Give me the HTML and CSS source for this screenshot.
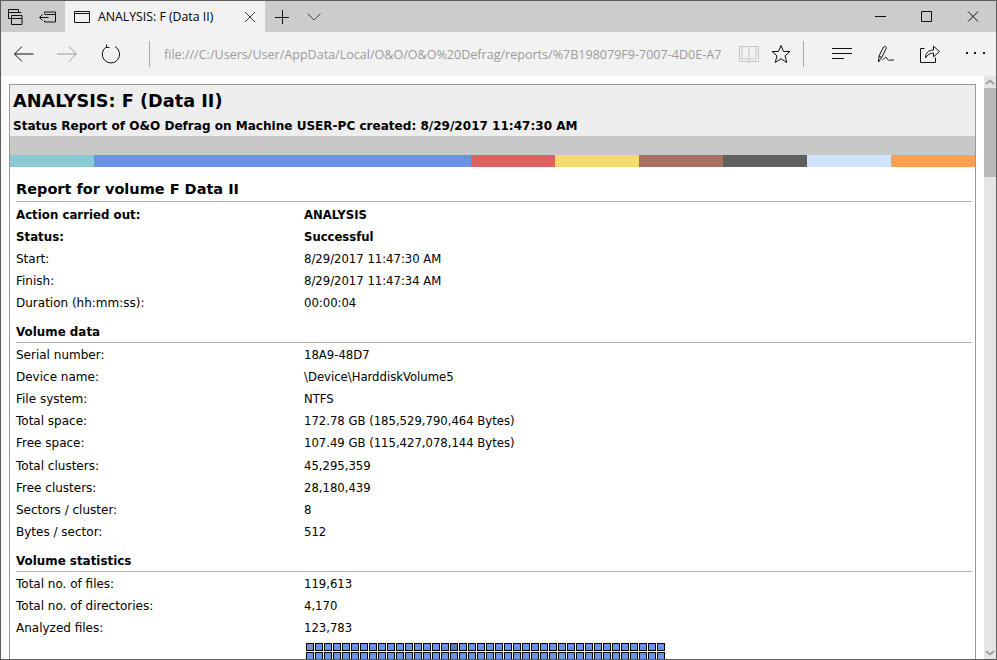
FILE: index.html
```html
<!DOCTYPE html>
<html lang="en">
<head>
<meta charset="utf-8">
<title>ANALYSIS: F (Data II)</title>
<link rel="stylesheet" href="styles.css">
</head>
<body>
<div class="window">
  <div class="tabstrip">
    <div class="strip-btn">
      <svg width="20" height="20" viewBox="0 0 20 20" class="ic"><path d="M1.500 2.500h10v3M1.500 2.500v9h3M1.500 5.500h13M4.500 8.500h10.500v9h-10.500zM4.500 11.500h10.500"/></svg>
    </div>
    <div class="strip-btn">
      <svg width="20" height="20" viewBox="0 0 20 20" class="ic"><path d="M5.500 6.500v-1.500h11v10h-11v-1.500M5.500 7.500h11M0.500 10.500h9M3.500 7.500l-3 3 3 3"/></svg>
    </div>
    <div class="tab">
      <svg width="18" height="14" viewBox="0 0 18 14" class="ic tab-ic"><path d="M1.500 1.500h15v11h-15zM1.500 3.500h15"/></svg>
      <span class="tab-title">ANALYSIS: F (Data II)</span>
      <svg width="12" height="12" viewBox="0 0 12 12" class="ic tab-x"><path d="M1 1l10 10M11 1l-10 10"/></svg>
    </div>
    <div class="strip-btn plus">
      <svg width="14" height="14" viewBox="0 0 14 14" class="ic"><path d="M7.500 0v14M0 7.500h14"/></svg>
    </div>
    <div class="strip-btn chev">
      <svg width="14" height="8" viewBox="0 0 14 8" class="ic"><path d="M0.500 0.500l6.500 6.500 6.500-6.500"/></svg>
    </div>
    <div class="spacer"></div>
    <div class="win-btn"><svg width="12" height="11" viewBox="0 0 12 11" class="ic"><path d="M0 5.500h11"/></svg></div>
    <div class="win-btn"><svg width="12" height="11" viewBox="0 0 12 11" class="ic"><path d="M0.500 0.500h10v10h-10z"/></svg></div>
    <div class="win-btn"><svg width="12" height="11" viewBox="0 0 12 11" class="ic"><path d="M1 0.500l10 10M11 0.500l-10 10"/></svg></div>
  </div>
  <div class="toolbar">
    <div class="nav-btn back"><svg width="20" height="16" viewBox="0 0 20 16" class="ic"><path d="M0.500 8h19M8 0.500l-7.500 7.500 7.500 7.500"/></svg></div>
    <div class="nav-btn fwd"><svg width="20" height="16" viewBox="0 0 20 16" class="ic dim"><path d="M0 8h19M12 0.500l7.500 7.500-7.500 7.500"/></svg></div>
    <div class="nav-btn reload"><svg width="20" height="20" viewBox="0 0 20 20" class="ic"><path d="M5.500 2.800a8.700 8.700 0 1 0 8.500 -0.200M5.500 0.500v3h3"/></svg></div>
    <div class="sep"></div>
    <div class="url">file:///C:/Users/User/AppData/Local/O&amp;O/O&amp;O%20Defrag/reports/%7B198079F9-7007-4D0E-A7</div>
    <svg width="20" height="18" viewBox="0 0 20 18" class="ic faint book"><path d="M0.500 1.500h8l1.500 1 1.500-1h8v15h-8l-1.500 1-1.500-1h-8zM3 1.500v12.500h6.500M17 1.500v12.500h-6.500M10 2.500v14"/></svg>
    <svg width="20" height="20" viewBox="0 0 20 20" class="ic star"><path d="M10 1.500l2.500 6h6.500l-5 4.300 1.800 6.700-5.800-3.700-5.800 3.700 1.800-6.700-5-4.300h6.500z"/></svg>
    <div class="sep sep2"></div>
    <svg width="20" height="14" viewBox="0 0 20 14" class="ic hub"><path d="M0 1.500h20M0 6.500h20M0 11.500h12"/></svg>
    <svg width="18" height="18" viewBox="0 0 18 18" class="ic note"><path d="M1.500 17l0.500-6 4.500-9c0.800-1.400 3.400-0.300 2.800 1.200l-4.600 9.300zM2 11l2.700 1.500M5.500 15c1.500-1 2.500-2.800 3.500-2.800 1 0 1 2.600 2.500 3 1.500 0.300 3-0.400 5.500-0.200"/></svg>
    <svg width="20" height="18" viewBox="0 0 20 18" class="ic share"><path d="M4.500 3.500h-4v14h15v-5M5.500 13c0-5 3-8 8-8v-3.800l6 5.300-6 5.300v-3.800c-3 0-6 1.500-8 5"/></svg>
    <svg width="20" height="4" viewBox="0 0 20 4" class="more"><rect x="0" y="0" width="2" height="2"/><rect x="8" y="0" width="2" height="2"/><rect x="17" y="0" width="2" height="2"/></svg>
  </div>
  <div class="content">
    <div class="page">
      <div class="report">
        <div class="head">
          <h1>ANALYSIS: F (Data II)</h1>
          <p class="sub">Status Report of O&amp;O Defrag on Machine USER-PC created: 8/29/2017 11:47:30 AM</p>
        </div>
        <div class="band"></div>
        <div class="colors">
          <i class="c1"></i><i class="c2"></i><i class="c3"></i><i class="c4"></i><i class="c5"></i><i class="c6"></i><i class="c7"></i><i class="c8"></i>
        </div>
        <div class="body">
          <h2>Report for volume F Data II</h2>
          <dl class="rows first">
            <dt class="b">Action carried out:</dt><dd class="b">ANALYSIS</dd>
            <dt class="b">Status:</dt><dd class="b">Successful</dd>
            <dt>Start:</dt><dd>8/29/2017 11:47:30 AM</dd>
            <dt>Finish:</dt><dd>8/29/2017 11:47:34 AM</dd>
            <dt>Duration (hh:mm:ss):</dt><dd>00:00:04</dd>
          </dl>
          <h3>Volume data</h3>
          <dl class="rows">
            <dt>Serial number:</dt><dd>18A9-48D7</dd>
            <dt>Device name:</dt><dd>\Device\HarddiskVolume5</dd>
            <dt>File system:</dt><dd>NTFS</dd>
            <dt>Total space:</dt><dd>172.78 GB (185,529,790,464 Bytes)</dd>
            <dt>Free space:</dt><dd>107.49 GB (115,427,078,144 Bytes)</dd>
            <dt>Total clusters:</dt><dd>45,295,359</dd>
            <dt>Free clusters:</dt><dd>28,180,439</dd>
            <dt>Sectors / cluster:</dt><dd>8</dd>
            <dt>Bytes / sector:</dt><dd>512</dd>
          </dl>
          <h3>Volume statistics</h3>
          <dl class="rows">
            <dt>Total no. of files:</dt><dd>119,613</dd>
            <dt>Total no. of directories:</dt><dd>4,170</dd>
            <dt>Analyzed files:</dt><dd>123,783</dd>
          </dl>
          <div class="blocks">
            <i class="m1"></i><i></i><i></i><i></i><i></i><i></i><i></i><i></i><i></i><i></i><i></i><i></i><i></i><i></i><i></i><i></i><i class="m2"></i><i></i><i></i><i></i><i></i><i></i><i></i><i></i><i></i><i></i><i></i><i></i><i></i><i></i><i></i><i></i><i></i><i></i><i></i><i></i><i></i><i></i><i></i><i></i>
            <i></i><i></i><i></i><i></i><i></i><i></i><i></i><i></i><i></i><i></i><i></i><i></i><i></i><i></i><i></i><i></i><i></i><i></i><i></i><i></i><i></i><i></i><i></i><i></i><i></i><i></i><i></i><i></i><i class="m3"></i><i></i><i></i><i></i><i></i><i></i><i></i><i></i><i></i><i></i><i></i><i></i>
          </div>
        </div>
      </div>
    </div>
    <div class="scrollbar">
      <svg width="12" height="12" viewBox="0 0 12 12" class="arrow"><path d="M2 8l4-3.500 4 3.500"/></svg>
      <div class="thumb"></div>
      <div class="track"></div>
      <svg width="12" height="12" viewBox="0 0 12 12" class="arrow"><path d="M2 4l4 3.500 4-3.500"/></svg>
    </div>
  </div>
</div>
</body>
</html>
```
FILE: styles.css
```css
* { box-sizing: border-box; }
html, body { margin: 0; height: 100%; overflow: hidden; background: #fff; }
.window {
  width: 997px; height: 660px; display: flex; flex-direction: column;
  border: 1px solid #5c5c5c; overflow: hidden;
  font-family: "Open Sans", "Noto Sans", sans-serif; color: #000;
}
.ic { fill: none; stroke: #111; stroke-width: 1; display: block; flex: none; }
.ic.dim { stroke: #9a9a9a; }
.ic.faint { stroke: #c4c4c4; }

.tabstrip { height: 31px; background: #ccc; display: flex; align-items: center; flex: none; }
.strip-btn { width: 32px; height: 31px; display: flex; align-items: center; justify-content: center; }
.strip-btn.plus { width: 33px; }
.strip-btn.chev { width: 32px; }
.strip-btn.chev .ic { stroke: #444; }
.tab { width: 200px; height: 31px; background: #f2f2f2; display: flex; align-items: center; padding-left: 8px; }
.tab-title { margin-left: 7px; font-size: 12.300px; width: 146px; white-space: nowrap; }
.tab-x { stroke: #333; }
.spacer { flex: 1; }
.win-btn { width: 46px; height: 31px; display: flex; align-items: center; justify-content: center; }

.toolbar { height: 44px; background: #f2f2f2; display: flex; align-items: center; flex: none; }
.nav-btn { display: flex; align-items: center; justify-content: center; flex: none; }
.back { margin-left: 13px; }
.fwd { margin-left: 23px; }
.reload { margin-left: 24px; }
.sep { width: 1px; height: 26px; background: #a6a6a6; margin-left: 28px; flex: none; }
.url { margin-left: 14px; width: 557px; font-size: 12.550px; color: #9b9b9b; white-space: nowrap; overflow: hidden; }
.book { margin-left: 18px; }
.star { margin-left: 12px; }
.sep2 { margin-left: 12px; }
.hub { margin-left: 28px; }
.note { margin-left: 25px; }
.share { margin-left: 25px; }
.more { margin-left: 26px; fill: #111; flex: none; }

.content { flex: 1; display: flex; min-height: 0; }
.page { flex: 1; min-width: 0; padding: 8px 8px 0 8px; background: #fff; overflow: hidden; }
.report { border: 1px solid #999; border-bottom: 0; font-family: "DejaVu Sans", Verdana, sans-serif; }
.head { background: #eee; height: 51px; padding: 5px 3px 0; }
h1 { margin: 0; font-size: 17.700px; line-height: 22px; font-weight: bold; }
.sub { margin: 6px 0 0; font-size: 12.050px; line-height: 16px; font-weight: bold; }
.band { height: 19px; background: #c8c8c8; }
.colors { display: flex; height: 12px; }
.colors i { display: block; flex: none; width: 84px; }
.colors .c1 { background: #8ac8d2; }
.colors .c2 { background: #6893e8; width: 377px; }
.colors .c3 { background: #e06060; }
.colors .c4 { background: #f4dc6c; }
.colors .c5 { background: #a87060; }
.colors .c6 { background: #606060; }
.colors .c7 { background: #d0e4fc; }
.colors .c8 { background: #ffa050; flex: 1; }
.body { padding: 12px 3px 0 6px; }
h2 { margin: 0; font-size: 14.500px; line-height: 20px; font-weight: bold; border-bottom: 1px solid #b4b4b4; height: 23px; }
h3 { margin: 9px 0 0; font-size: 11.900px; line-height: 18px; height: 20px; font-weight: bold; border-bottom: 1px solid #b4b4b4; }
.rows { margin: 0.600px 0 0; display: grid; grid-template-columns: 288px 1fr; grid-auto-rows: 22.100px; font-size: 11.650px; line-height: 22px; }
.rows.first { margin-top: 2px; }
dt, dd { margin: 0; white-space: nowrap; }
dt { font-size: 12px; }
dt.b { font-size: 11.800px; }
.b { font-weight: bold; }
.blocks { display: grid; grid-template-columns: repeat(40, 9px); grid-auto-rows: 9px; margin: 3.800px 0 0 290px; width: 360px; }
.blocks i { display: block; width: 8px; height: 8px; background: #6893e8; border: 1px solid #000; }
.blocks .m1 { background: #7a8fc8; }
.blocks .m2 { background: #5878b8; }
.blocks .m3 { background: #68a0e0; }

.scrollbar { width: 12px; flex: none; background: #e6e6e6; display: flex; flex-direction: column; }
.thumb { height: 89px; background: #b9b9b9; flex: none; }
.track { flex: 1; }
.arrow { fill: none; stroke: #a0a0a0; stroke-width: 2; display: block; flex: none; }
```
